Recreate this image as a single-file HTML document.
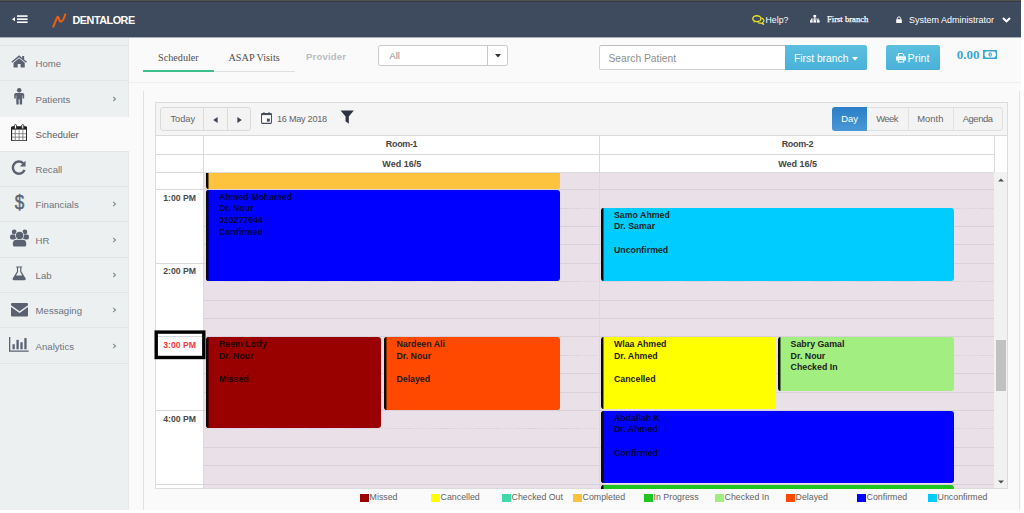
<!DOCTYPE html>
<html>
<head>
<meta charset="utf-8">
<title>Dentalore Scheduler</title>
<style>
*{box-sizing:border-box;margin:0;padding:0}
html,body{width:1024px;height:513px;overflow:hidden;background:#fafafa;font-family:"Liberation Sans",sans-serif;}
.abs{position:absolute}
#page{position:relative;width:1024px;height:513px;overflow:hidden;background:#fafafa}
/* header */
#hdr{left:0;top:0;width:1024px;height:37px;background:#3e4a5d;box-shadow:0 1px 0 #a6aeb6}
#hdrtop{left:0;top:0;width:1024px;height:2px;background:linear-gradient(#515151 0 50%,#383b41 50% 100%)}
.ht{color:#fff;font-size:9.5px;white-space:nowrap;line-height:12px}
/* sidebar */
#side{left:0;top:38px;width:128px;height:476px;background:#ecf0f1;box-shadow:1px 0 0 #e6e9eb}
.mi{left:0;width:128px;height:35.3px;z-index:1}
.mi::before{content:"";position:absolute;left:0;top:-0.6px;width:128px;height:1px;background:#e1e5e7}
.mi.act::before{display:none}
.mi .lbl{position:absolute;left:35.6px;top:12.8px;font-size:9.6px;color:#6c7380;line-height:12px;white-space:nowrap}
.mi .chev{position:absolute;left:111.5px;top:13.8px;width:5px;height:8px}
.mi svg.ic{position:absolute}
.mi.act{background:none}
.mi.act .lbl{color:#565b66}
.mi.act::after{content:"";position:absolute;left:0;top:0.7px;width:129px;height:34.4px;background:#fafafa;z-index:-1}
/* tabs */
.tab{font-family:"Liberation Serif",serif;font-size:10.2px;color:#505050;white-space:nowrap;line-height:12px}
/* scheduler */
#sch{left:155px;top:102px;width:848px;height:386px;background:#fff;border:1px solid #dcdcdc}
.tbtn{font-size:9.4px;color:#646464;white-space:nowrap;line-height:12px}
.hl{background:#dcdcdc;height:1px}
.vl{background:#dcdcdc;width:1px}
.hdtxt{font-size:9px;font-weight:bold;color:#444;white-space:nowrap;line-height:11px;text-align:center}
.tm{font-size:8.7px;font-weight:bold;color:#444;white-space:nowrap;line-height:11px}
.ev{border-radius:3px;overflow:hidden;font-size:8.8px;font-weight:bold;line-height:11.7px;color:#1a1a1a;white-space:nowrap}
.ev .bar{position:absolute;left:0;top:0;bottom:0;width:2px;background:#0a0a0a;box-shadow:1px 0 0 rgba(0,0,0,0.45)}
.ev .tx{position:absolute;left:12.8px;top:1.9px}
.lg{font-size:8.8px;color:#626262;white-space:nowrap;line-height:11px}
.lgb{width:8.5px;height:8.5px}
</style>
</head>
<body>
<div id="page">

<!-- ===== HEADER ===== -->
<div id="hdr" class="abs"></div>
<div id="hdrtop" class="abs"></div>
<!-- hamburger -->
<svg preserveAspectRatio="none" class="abs" style="left:12.1px;top:15.4px" width="16" height="8.4" viewBox="0 0 16 9"><path d="M0 4.5 L3 2.2 L3 6.8 Z" fill="#fff"/><rect x="5" y="0.3" width="10.6" height="1.7" fill="#fff"/><rect x="5" y="3.6" width="10.6" height="1.7" fill="#fff"/><rect x="5" y="6.9" width="10.6" height="1.7" fill="#fff"/></svg>
<!-- logo -->
<svg preserveAspectRatio="none" class="abs" style="left:52px;top:12.5px" width="15" height="15" viewBox="0 0 15 15"><path d="M1.3 13.7 C2.7 10.6 4 6.6 5.2 4.4 C5.8 3.4 6.5 3.9 6.7 4.9 C7.1 6.8 7.7 8.9 9.1 8.6 C11.2 8.1 12.4 4.4 13.2 1.5" fill="none" stroke="#ea5e17" stroke-width="2.1" stroke-linecap="round" stroke-linejoin="round"/></svg>
<div class="abs ht" style="left:72.5px;top:13.5px;font-size:10.8px;font-weight:bold;line-height:13px;letter-spacing:-0.47px">DENTALORE</div>
<!-- help -->
<svg preserveAspectRatio="none" class="abs" style="left:752px;top:15.2px" width="12.6" height="9.8" viewBox="0 0 13 10"><ellipse cx="5" cy="3.8" rx="4.2" ry="3" fill="none" stroke="#e9e32a" stroke-width="1.4"/><path d="M2.2 6 L1.4 8 L4 6.8 Z" fill="#e9e32a"/><path d="M9.8 3.2 C11.4 3.6 12.3 4.6 12.3 5.6 C12.3 6.5 11.8 7.2 11 7.6 L11.8 9.4 L9.4 8.3 C8 8.5 6.6 8.2 5.8 7.5" fill="none" stroke="#e9e32a" stroke-width="1.2"/></svg>
<div class="abs ht" style="left:765.6px;top:13.6px;font-size:8.7px">Help?</div>
<!-- sitemap -->
<svg preserveAspectRatio="none" class="abs" style="left:810.4px;top:15px" width="9.6" height="7.8" viewBox="0 0 10 8.5"><rect x="3.6" y="0" width="2.8" height="2.6" fill="#fff"/><rect x="4.6" y="2.4" width="0.9" height="2" fill="#fff"/><rect x="1.2" y="4" width="7.6" height="0.9" fill="#fff"/><rect x="0" y="5.6" width="2.8" height="2.7" fill="#fff"/><rect x="3.6" y="5.6" width="2.8" height="2.7" fill="#fff"/><rect x="7.2" y="5.6" width="2.8" height="2.7" fill="#fff"/><rect x="1" y="4" width="0.9" height="2" fill="#fff"/><rect x="4.6" y="4" width="0.9" height="2" fill="#fff"/><rect x="8.1" y="4" width="0.9" height="2" fill="#fff"/></svg>
<div class="abs ht" style="left:827px;top:12.7px;font-family:'Liberation Serif',serif;font-size:8.6px;-webkit-text-stroke:0.25px #fff">First branch</div>
<!-- lock -->
<svg preserveAspectRatio="none" class="abs" style="left:895.8px;top:15.6px" width="6" height="7.4" viewBox="0 0 7 8.5"><path d="M1.6 4 L1.6 2.6 C1.6 0.4 5.4 0.4 5.4 2.6 L5.4 4" fill="none" stroke="#fff" stroke-width="1.1"/><rect x="0.2" y="3.7" width="6.6" height="4.6" rx="0.6" fill="#fff"/></svg>
<div class="abs ht" style="left:909px;top:14.4px;font-size:9.0px">System Administrator</div>
<svg preserveAspectRatio="none" class="abs" style="left:1002px;top:17px" width="9" height="6" viewBox="0 0 9 6"><path d="M1 1 L4.5 4.4 L8 1" fill="none" stroke="#fff" stroke-width="2.1"/></svg>

<!-- ===== SIDEBAR ===== -->
<div id="side" class="abs"></div>
<div class="abs mi" style="top:45.5px"><svg preserveAspectRatio="none" class="ic" style="left:11.4px;top:9.5px" width="16.3" height="12.9" viewBox="0 0 16 13"><path d="M8 0.3 L0.3 6.9 L1.2 7.9 L8 2.2 L14.8 7.9 L15.7 6.9 L12.9 4.5 L12.9 1 L11 1 L11 2.9 Z" fill="#5a6272"/><path d="M8 3.3 L2.5 7.9 L2.5 12.7 L6.6 12.7 L6.6 9.2 L9.4 9.2 L9.4 12.7 L13.5 12.7 L13.5 7.9 Z" fill="#5a6272"/></svg><div class="lbl">Home</div></div>
<div class="abs mi" style="top:80.8px"><svg preserveAspectRatio="none" class="ic" style="left:14.3px;top:7.7px" width="10.4" height="16.6" viewBox="0 0 10.4 16.6"><circle cx="5.2" cy="2.3" r="2.25" fill="#5a6272"/><path d="M2 5 L8.4 5 C9.5 5 10.2 5.7 10.2 6.8 L10.2 10.6 L8.6 10.6 L8.6 7.4 L8.1 7.4 L8.1 16.4 L5.7 16.4 L5.7 11.2 L4.7 11.2 L4.7 16.4 L2.3 16.4 L2.3 7.4 L1.8 7.4 L1.8 10.6 L0.2 10.6 L0.2 6.8 C0.2 5.7 0.9 5 2 5 Z" fill="#5a6272"/></svg><div class="lbl">Patients</div><svg preserveAspectRatio="none" class="chev" viewBox="0 0 5 8"><path d="M1.2 1.8 L3.5 4 L1.2 6.2" fill="none" stroke="#7f8794" stroke-width="1.1"/></svg></div>
<div class="abs mi act" style="top:116.1px"><svg preserveAspectRatio="none" class="ic" style="left:11px;top:7.6px" width="16.2" height="17.4" viewBox="0 0 17 18"><rect x="0.6" y="3" width="15.8" height="14.4" rx="1.2" fill="#fff" stroke="#222" stroke-width="1.2"/><rect x="0.6" y="3" width="15.8" height="2.8" fill="#222"/><rect x="3.6" y="0.6" width="2.2" height="4.6" rx="1.1" fill="#fff" stroke="#222" stroke-width="0.9"/><rect x="11.2" y="0.6" width="2.2" height="4.6" rx="1.1" fill="#fff" stroke="#222" stroke-width="0.9"/><path d="M4.5 6.4 V17 M8.5 6.4 V17 M12.5 6.4 V17 M1 10 H16 M1 13.6 H16" stroke="#6a6a72" stroke-width="0.8" fill="none"/></svg><div class="lbl">Scheduler</div></div>
<div class="abs mi" style="top:151.4px"><svg preserveAspectRatio="none" class="ic" style="left:11.4px;top:8.9px" width="15.4" height="15.4" viewBox="0 0 15 15"><path d="M11.9 3.3 A5.9 5.9 0 1 0 13.2 9.6" fill="none" stroke="#5a6272" stroke-width="2.4"/><path d="M14.2 0.7 L14.2 6.3 L8.6 6.3 Z" fill="#5a6272"/></svg><div class="lbl">Recall</div></div>
<div class="abs mi" style="top:186.7px"><div class="ic abs" style="left:13.9px;top:5.7px;font-size:19.4px;line-height:20px;font-weight:normal;transform:scaleX(0.88);-webkit-text-stroke:0.45px #5a6272;color:#5a6272">$</div><div class="lbl">Financials</div><svg preserveAspectRatio="none" class="chev" viewBox="0 0 5 8"><path d="M1.2 1.8 L3.5 4 L1.2 6.2" fill="none" stroke="#7f8794" stroke-width="1.1"/></svg></div>
<div class="abs mi" style="top:222.0px"><svg preserveAspectRatio="none" class="ic" style="left:9.8px;top:6.5px" width="19" height="18" viewBox="0 0 19 18"><circle cx="4.2" cy="2.9" r="2.4" fill="#5a6272"/><circle cx="14.9" cy="2.9" r="2.4" fill="#5a6272"/><rect x="0.1" y="5.6" width="6" height="4.8" rx="1.6" fill="#5a6272"/><rect x="12.9" y="5.6" width="6" height="4.8" rx="1.6" fill="#5a6272"/><circle cx="9.6" cy="6.4" r="4.4" fill="#ecf0f1"/><circle cx="9.6" cy="6.4" r="3.7" fill="#5a6272"/><path d="M2.2 13.9 C2.2 11.2 4.2 10 6.4 10 L12.8 10 C15 10 16.6 11.2 16.6 13.9 L16.6 16 C16.6 17.1 15.9 17.7 14.9 17.7 L3.9 17.7 C2.9 17.7 2.2 17.1 2.2 16 Z" fill="#ecf0f1"/><path d="M2.9 14.2 C2.9 11.8 4.6 10.7 6.6 10.7 L12.6 10.7 C14.6 10.7 16.2 11.8 16.2 14.2 L16.2 15.9 C16.2 16.8 15.6 17.4 14.8 17.4 L4.3 17.4 C3.5 17.4 2.9 16.8 2.9 15.9 Z" fill="#5a6272"/></svg><div class="lbl">HR</div><svg preserveAspectRatio="none" class="chev" viewBox="0 0 5 8"><path d="M1.2 1.8 L3.5 4 L1.2 6.2" fill="none" stroke="#7f8794" stroke-width="1.1"/></svg></div>
<div class="abs mi" style="top:257.3px"><svg preserveAspectRatio="none" class="ic" style="left:12px;top:9.2px" width="14.3" height="14.7" viewBox="0 0 15 15"><path d="M4.4 0.4 L10.6 0.4 L10.6 1.6 L9.8 1.6 L9.8 5.6 L14.2 12.6 C14.8 13.6 14.2 14.6 13 14.6 L2 14.6 C0.8 14.6 0.2 13.6 0.8 12.6 L5.2 5.6 L5.2 1.6 L4.4 1.6 Z M6.4 1.6 L6.4 6 L4.2 9.6 L10.8 9.6 L8.6 6 L8.6 1.6 Z" fill="#5a6272" fill-rule="evenodd"/></svg><div class="lbl">Lab</div><svg preserveAspectRatio="none" class="chev" viewBox="0 0 5 8"><path d="M1.2 1.8 L3.5 4 L1.2 6.2" fill="none" stroke="#7f8794" stroke-width="1.1"/></svg></div>
<div class="abs mi" style="top:292.6px"><svg preserveAspectRatio="none" class="ic" style="left:10.9px;top:10.7px" width="17.1" height="13.6" viewBox="0 0 17 12.5"><path d="M0 1.2 C0 0.5 0.5 0 1.2 0 L15.8 0 C16.5 0 17 0.5 17 1.2 L17 2 L8.5 7.6 L0 2 Z" fill="#5a6272"/><path d="M0 3.6 L8.5 9.2 L17 3.6 L17 11.3 C17 12 16.5 12.5 15.8 12.5 L1.2 12.5 C0.5 12.5 0 12 0 11.3 Z" fill="#5a6272"/></svg><div class="lbl">Messaging</div><svg preserveAspectRatio="none" class="chev" viewBox="0 0 5 8"><path d="M1.2 1.8 L3.5 4 L1.2 6.2" fill="none" stroke="#7f8794" stroke-width="1.1"/></svg></div>
<div class="abs mi" style="top:327.9px"><svg preserveAspectRatio="none" class="ic" style="left:9.3px;top:8.9px" width="19.7" height="14.8" viewBox="0 0 18 13.5"><path d="M0.6 0 L0.6 12.9 L18 12.9" fill="none" stroke="#5a6272" stroke-width="1.2"/><rect x="3.2" y="6.6" width="2.1" height="4.6" fill="#5a6272"/><rect x="6.8" y="2.6" width="2.1" height="8.6" fill="#5a6272"/><rect x="10.4" y="4.8" width="2.1" height="6.4" fill="#5a6272"/><rect x="14" y="1" width="2.1" height="10.2" fill="#5a6272"/></svg><div class="lbl">Analytics</div><svg preserveAspectRatio="none" class="chev" viewBox="0 0 5 8"><path d="M1.2 1.8 L3.5 4 L1.2 6.2" fill="none" stroke="#7f8794" stroke-width="1.1"/></svg></div>
<div class="abs mi" style="top:363.2px;height:1px"></div>

<!-- ===== MAIN ===== -->
<!-- tabs -->
<div class="abs tab" style="left:158px;top:51.9px">Scheduler</div>
<div class="abs tab" style="left:228.5px;top:51.9px">ASAP Visits</div>
<div class="abs" style="left:306px;top:50.7px;font-size:9.6px;font-weight:bold;color:#b9bdc2;line-height:12px;letter-spacing:0.15px">Provider</div>
<div class="abs" style="left:143px;top:70.5px;width:152px;height:1.4px;background:#dddfe0"></div>
<div class="abs" style="left:143px;top:70.3px;width:70.5px;height:1.6px;background:#3cc08c"></div>
<!-- select -->
<div class="abs" style="left:378.4px;top:44.6px;width:129.3px;height:21.4px;border:1px solid #c9c9c9;border-radius:2.5px;background:#fff"></div>
<div class="abs" style="left:487.3px;top:45.4px;width:1px;height:19.8px;background:#c9c9c9"></div>
<div class="abs" style="left:389.5px;top:49.5px;font-size:9.2px;color:#8a8a8a;line-height:12px">All</div>
<svg preserveAspectRatio="none" class="abs" style="left:494.5px;top:54px" width="6" height="4" viewBox="0 0 6 4"><path d="M0 0 L6 0 L3 3.6 Z" fill="#333"/></svg>
<!-- search -->
<div class="abs" style="left:599px;top:45px;width:187px;height:24.8px;border:1px solid #d2d2d2;border-top-color:#bdbdbd;border-radius:2.5px 0 0 2.5px;background:#fff"></div>
<div class="abs" style="left:608.5px;top:51.8px;font-size:10.3px;color:#8e8e8e;line-height:13px">Search Patient</div>
<div class="abs" style="left:785px;top:45px;width:82.4px;height:24.8px;background:linear-gradient(#5bbfe0,#49b2d9);border-radius:0 2.5px 2.5px 0;box-shadow:inset 0 -1px 0 #45acd3"></div>
<div class="abs" style="left:794px;top:51.6px;font-size:10.3px;color:#fff;line-height:13px">First branch</div>
<svg preserveAspectRatio="none" class="abs" style="left:851.5px;top:56.5px" width="6" height="4" viewBox="0 0 6 4"><path d="M0 0 L6 0 L3 3.4 Z" fill="#fff"/></svg>
<!-- print -->
<div class="abs" style="left:886px;top:45px;width:53.8px;height:24.8px;background:linear-gradient(#5bbfe0,#49b2d9);border-radius:2.5px;box-shadow:inset 0 -1px 0 #45acd3"></div>
<svg preserveAspectRatio="none" class="abs" style="left:895.5px;top:53px" width="10" height="9.5" viewBox="0 0 10 9.5"><path d="M2.3 3.2 L2.3 0.5 L6.6 0.5 L7.7 1.6 L7.7 3.2" fill="none" stroke="#fff" stroke-width="1"/><path d="M0.9 3.2 L9.1 3.2 C9.6 3.2 10 3.6 10 4.1 L10 7.4 L8.2 7.4 L8.2 5.8 L1.8 5.8 L1.8 7.4 L0 7.4 L0 4.1 C0 3.6 0.4 3.2 0.9 3.2 Z" fill="#fff"/><rect x="2.3" y="6.4" width="5.4" height="2.6" fill="none" stroke="#fff" stroke-width="1"/></svg>
<div class="abs" style="left:907.5px;top:51.5px;font-size:10.7px;color:#fff;line-height:13px">Print</div>
<!-- amount -->
<div class="abs" style="left:956.7px;top:47.6px;font-family:'Liberation Serif',serif;font-weight:bold;font-size:13px;color:#3aa6d6;line-height:14px">0.00</div>
<svg preserveAspectRatio="none" class="abs" style="left:982.6px;top:49.8px" width="14.4" height="9" viewBox="0 0 14 9"><rect x="0.6" y="0.6" width="12.8" height="7.8" fill="#3aa6d6" stroke="#3aa6d6" stroke-width="1.2"/><path d="M2.6 1.6 L11.4 1.6 C11.4 2.4 11.8 2.8 12.4 2.8 L12.4 6.2 C11.8 6.2 11.4 6.6 11.4 7.4 L2.6 7.4 C2.6 6.6 2.2 6.2 1.6 6.2 L1.6 2.8 C2.2 2.8 2.6 2.4 2.6 1.6 Z" fill="#fff"/><ellipse cx="7" cy="4.5" rx="1.7" ry="2.3" fill="#3aa6d6"/><rect x="6.7" y="3.1" width="0.7" height="2.8" fill="#fff"/></svg>
<!-- separators -->
<div class="abs" style="left:129px;top:82px;width:892px;height:1px;background:#efefef"></div>
<div class="abs" style="left:143px;top:91px;width:1px;height:419px;background:#e1e1e1"></div>
<div class="abs" style="left:1019.3px;top:91px;width:1px;height:419px;background:#e4e4e4"></div>
<!-- white strips -->
<div class="abs" style="left:1020.6px;top:0;width:4px;height:513px;background:#fff"></div>
<div class="abs" style="left:0;top:510.2px;width:1024px;height:3px;background:#fff"></div>
<!-- ===== SCHEDULER ===== -->
<div class="abs" style="left:155.4px;top:102.3px;width:852.8px;height:386.3px;background:#fff"></div>
<div class="abs" style="left:155.4px;top:102.3px;width:852.8px;height:32.9px;background:#f5f5f5"></div>
<div class="abs" style="left:203px;top:172.4px;width:790.7px;height:316.2px;background:#e9e0e8"></div>
<div class="abs" style="left:994.2px;top:172.4px;width:14.0px;height:316.2px;background:#f1f1f1"></div>
<div class="abs" style="left:996.2px;top:339.5px;width:10.0px;height:51.5px;background:#c1c1c1"></div>
<svg preserveAspectRatio="none" class="abs" style="left:997.5px;top:177.5px" width="6" height="4" viewBox="0 0 6 4"><path d="M0 3.6 L6 3.6 L3 0.4 Z" fill="#505050"/></svg>
<svg preserveAspectRatio="none" class="abs" style="left:997.5px;top:479.7px" width="6" height="4" viewBox="0 0 6 4"><path d="M0 0.4 L6 0.4 L3 3.6 Z" fill="#505050"/></svg>
<div class="abs" style="left:203px;top:189.2px;width:790.7px;height:1px;background:#d9d1d9"></div>
<div class="abs" style="left:155.4px;top:189.2px;width:48.1px;height:1px;background:#dadada"></div>
<div class="abs" style="left:203px;top:207.6px;width:790.7px;height:1px;background:repeating-linear-gradient(90deg,#d9d1d9 0 1.5px,#e6dde5 1.5px 2.93px)"></div>
<div class="abs" style="left:203px;top:226.0px;width:790.7px;height:1px;background:#d9d1d9"></div>
<div class="abs" style="left:203px;top:244.4px;width:790.7px;height:1px;background:#d9d1d9"></div>
<div class="abs" style="left:203px;top:262.8px;width:790.7px;height:1px;background:#d9d1d9"></div>
<div class="abs" style="left:155.4px;top:262.8px;width:48.1px;height:1px;background:#dadada"></div>
<div class="abs" style="left:203px;top:281.2px;width:790.7px;height:1px;background:repeating-linear-gradient(90deg,#d9d1d9 0 1.5px,#e6dde5 1.5px 2.93px)"></div>
<div class="abs" style="left:203px;top:299.6px;width:790.7px;height:1px;background:#d9d1d9"></div>
<div class="abs" style="left:203px;top:318.0px;width:790.7px;height:1px;background:#d9d1d9"></div>
<div class="abs" style="left:203px;top:336.4px;width:790.7px;height:1px;background:#d9d1d9"></div>
<div class="abs" style="left:155.4px;top:336.4px;width:48.1px;height:1px;background:#dadada"></div>
<div class="abs" style="left:203px;top:354.8px;width:790.7px;height:1px;background:repeating-linear-gradient(90deg,#d9d1d9 0 1.5px,#e6dde5 1.5px 2.93px)"></div>
<div class="abs" style="left:203px;top:373.2px;width:790.7px;height:1px;background:#d9d1d9"></div>
<div class="abs" style="left:203px;top:391.6px;width:790.7px;height:1px;background:#d9d1d9"></div>
<div class="abs" style="left:203px;top:410.0px;width:790.7px;height:1px;background:#d9d1d9"></div>
<div class="abs" style="left:155.4px;top:410.0px;width:48.1px;height:1px;background:#dadada"></div>
<div class="abs" style="left:203px;top:428.4px;width:790.7px;height:1px;background:repeating-linear-gradient(90deg,#d9d1d9 0 1.5px,#e6dde5 1.5px 2.93px)"></div>
<div class="abs" style="left:203px;top:446.8px;width:790.7px;height:1px;background:#d9d1d9"></div>
<div class="abs" style="left:203px;top:465.2px;width:790.7px;height:1px;background:#d9d1d9"></div>
<div class="abs" style="left:203px;top:483.6px;width:790.7px;height:1px;background:#d9d1d9"></div>
<div class="abs" style="left:155.4px;top:483.6px;width:48.1px;height:1px;background:#dadada"></div>
<div class="abs" style="left:155.4px;top:135.2px;width:852.8px;height:1px;background:#dadada"></div>
<div class="abs" style="left:155.4px;top:153.9px;width:838.8px;height:1px;background:#dadada"></div>
<div class="abs" style="left:155.4px;top:172.4px;width:838.8px;height:1px;background:#dadada"></div>
<div class="abs" style="left:203px;top:135.2px;width:1px;height:353.4px;background:#dadada"></div>
<div class="abs" style="left:599.0px;top:135.2px;width:1px;height:353.4px;background:#dadada"></div>
<div class="abs" style="left:994.2px;top:135.2px;width:1px;height:37.2px;background:#dadada"></div>
<div class="abs" style="left:155.4px;top:102.3px;width:852.8px;height:386.3px;border:1px solid #dcdcdc"></div>
<div class="abs hdtxt" style="left:203.8px;top:138.9px;width:395.5px;letter-spacing:-0.35px">Room-1</div>
<div class="abs hdtxt" style="left:599.8px;top:138.9px;width:395.2px;letter-spacing:-0.35px">Room-2</div>
<div class="abs hdtxt" style="left:204.0px;top:159.1px;width:395.5px">Wed 16/5</div>
<div class="abs hdtxt" style="left:600.0px;top:159.1px;width:395.2px">Wed 16/5</div>
<div class="abs tm" style="left:163.2px;top:192.8px;color:#4a4a4a">1:00 PM</div>
<div class="abs tm" style="left:163.2px;top:266.4px;color:#4a4a4a">2:00 PM</div>
<div class="abs tm" style="left:163.2px;top:340.0px;color:#f53a3c">3:00 PM</div>
<div class="abs tm" style="left:163.2px;top:413.6px;color:#4a4a4a">4:00 PM</div>
<svg preserveAspectRatio="none" class="abs" style="left:150px;top:326px" width="60" height="38" viewBox="0 0 60 38"><rect x="6.2" y="6.1" width="47.6" height="25.4" fill="none" stroke="#000" stroke-width="3.4"/></svg>
<div class="abs" style="left:160.3px;top:107px;width:90.5px;height:23.6px;border:1px solid #dadada;border-radius:3px;background:#f3f3f3"></div>
<div class="abs" style="left:203px;top:108px;width:1px;height:21.8px;background:#dcdcdc"></div>
<div class="abs" style="left:227px;top:108px;width:1px;height:21.8px;background:#dcdcdc"></div>
<div class="abs tbtn" style="left:170.5px;top:113.2px;font-size:9.2px">Today</div>
<svg preserveAspectRatio="none" class="abs" style="left:213.3px;top:116.5px" width="5" height="6" viewBox="0 0 5 6"><path d="M4.6 0 L4.6 6 L0.2 3 Z" fill="#3c4557"/></svg>
<svg preserveAspectRatio="none" class="abs" style="left:236.6px;top:116.5px" width="5" height="6" viewBox="0 0 5 6"><path d="M0.4 0 L0.4 6 L4.8 3 Z" fill="#3c4557"/></svg>
<svg preserveAspectRatio="none" class="abs" style="left:260.6px;top:112.3px" width="11" height="12" viewBox="0 0 12 12"><rect x="0.6" y="1.6" width="10.8" height="9.8" rx="0.8" fill="#fff" stroke="#454c5a" stroke-width="1.1"/><rect x="0.6" y="1.6" width="10.8" height="1.5" fill="#454c5a"/><rect x="2.6" y="0.2" width="1.3" height="2.4" fill="#454c5a"/><rect x="8.1" y="0.2" width="1.3" height="2.4" fill="#454c5a"/><rect x="6.4" y="6.6" width="3.2" height="3" fill="#454c5a"/></svg>
<div class="abs tbtn" style="left:277px;top:113.2px;font-size:9.1px;letter-spacing:-0.25px">16 May 2018</div>
<svg preserveAspectRatio="none" class="abs" style="left:340.3px;top:109.8px" width="14.4" height="14.4" viewBox="0 0 15 15"><path d="M0.6 0.6 L14.4 0.6 L9.2 6.8 L9.2 14.4 L5.8 11.6 L5.8 6.8 Z" fill="#2e3340"/></svg>
<div class="abs" style="left:832px;top:107px;width:170.5px;height:23.6px;border:1px solid #e0e0e0;border-radius:3px;background:#f3f3f3"></div>
<div class="abs" style="left:832px;top:107px;width:35px;height:23.6px;border-radius:3px 0 0 3px;background:linear-gradient(#2a7fc7,#4a98d6)"></div>
<div class="abs" style="left:907.5px;top:108px;width:1px;height:21.8px;background:#e2e2e2"></div>
<div class="abs" style="left:952.8px;top:108px;width:1px;height:21.8px;background:#e2e2e2"></div>
<div class="abs tbtn" style="left:841.3px;top:113.2px;color:#fff">Day</div>
<div class="abs tbtn" style="left:876.2px;top:113.2px;letter-spacing:-0.5px">Week</div>
<div class="abs tbtn" style="left:917.3px;top:113.2px">Month</div>
<div class="abs tbtn" style="left:962.8px;top:113.2px;letter-spacing:-0.45px">Agenda</div>
<div class="abs ev" style="left:206.1px;top:173.0px;width:353.5px;height:15.7px;background:#fec33e;color:#1c1c1c;border-radius:0 0 3px 3px"><div class="bar"></div><div class="tx"></div></div>
<div class="abs ev" style="left:206.1px;top:189.9px;width:353.5px;height:90.7px;background:#0000ff;color:#000040;border-radius:3px"><div class="bar"></div><div class="tx">Ahmed Mohamed<br>Dr. Nour<br>010277644<br>Confirmed</div></div>
<div class="abs ev" style="left:601.2px;top:207.9px;width:353.1px;height:72.7px;background:#00ccff;color:#1c1c1c;border-radius:3px"><div class="bar"></div><div class="tx">Samo Ahmed<br>Dr. Samar<br>&nbsp;<br>Unconfirmed</div></div>
<div class="abs ev" style="left:206.1px;top:337.2px;width:175.2px;height:91.0px;background:#990000;color:#220000;border-radius:3px"><div class="bar"></div><div class="tx">Reem Lotfy<br>Dr. Nour<br>&nbsp;<br>Missed</div></div>
<div class="abs ev" style="left:383.6px;top:337.2px;width:176.0px;height:72.5px;background:#ff4800;color:#1c1c1c;border-radius:3px"><div class="bar"></div><div class="tx">Nardeen Ali<br>Dr. Nour<br>&nbsp;<br>Delayed</div></div>
<div class="abs ev" style="left:601.2px;top:337.2px;width:174.5px;height:72.3px;background:#ffff00;color:#1c1c1c;border-radius:3px 3px 0 3px"><div class="bar"></div><div class="tx">Wlaa Ahmed<br>Dr. Ahmed<br>&nbsp;<br>Cancelled</div></div>
<div class="abs ev" style="left:777.8px;top:337.2px;width:176.5px;height:54.0px;background:#a3ee80;color:#1c1c1c;border-radius:3px"><div class="bar"></div><div class="tx">Sabry Gamal<br>Dr. Nour<br>Checked In</div></div>
<div class="abs ev" style="left:601.2px;top:410.9px;width:353.1px;height:72.3px;background:#0000ff;color:#000040;border-radius:3px"><div class="bar"></div><div class="tx">Abdallah K<br>Dr. Ahmed<br>&nbsp;<br>Confirmed</div></div>
<div class="abs ev" style="left:601.2px;top:484.5px;width:353.1px;height:4.1px;background:#1fc41f;color:#1c1c1c;border-radius:3px 3px 0 0"><div class="bar"></div><div class="tx"></div></div>
<div class="abs lgb" style="left:360px;top:493.8px;background:#990000"></div><div class="abs lg" style="left:369.6px;top:491.7px">Missed</div>
<div class="abs lgb" style="left:431px;top:493.8px;background:#ffff00"></div><div class="abs lg" style="left:440.6px;top:491.7px">Cancelled</div>
<div class="abs lgb" style="left:502px;top:493.8px;background:#3fd8a7"></div><div class="abs lg" style="left:511.6px;top:491.7px">Checked Out</div>
<div class="abs lgb" style="left:573px;top:493.8px;background:#fec33e"></div><div class="abs lg" style="left:582.6px;top:491.7px">Completed</div>
<div class="abs lgb" style="left:644px;top:493.8px;background:#1fc41f"></div><div class="abs lg" style="left:653.6px;top:491.7px">In Progress</div>
<div class="abs lgb" style="left:715px;top:493.8px;background:#a3ee80"></div><div class="abs lg" style="left:724.6px;top:491.7px">Checked In</div>
<div class="abs lgb" style="left:786px;top:493.8px;background:#ff4800"></div><div class="abs lg" style="left:795.6px;top:491.7px">Delayed</div>
<div class="abs lgb" style="left:857px;top:493.8px;background:#0000ff"></div><div class="abs lg" style="left:866.6px;top:491.7px">Confirmed</div>
<div class="abs lgb" style="left:928px;top:493.8px;background:#00ccff"></div><div class="abs lg" style="left:937.6px;top:491.7px">Unconfirmed</div>

</div>
</body>
</html>
